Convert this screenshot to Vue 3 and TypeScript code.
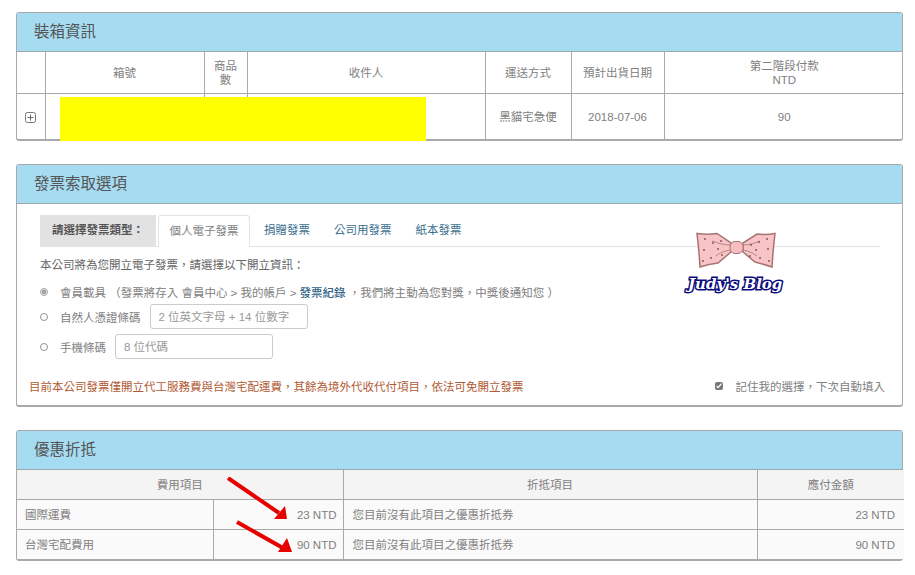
<template>
  <div class="page">
    <section class="panel">
      <h3 class="panel-title">裝箱資訊</h3>
      <div class="table-wrap">
        <table class="data-table packing">
          <colgroup>
            <col v-for="w in packingCols" :key="w" :style="{ width: w + 'px' }" />
          </colgroup>
          <tbody>
            <tr class="head-row">
              <td></td>
              <td>箱號</td>
              <td>商品<br />數</td>
              <td>收件人</td>
              <td>運送方式</td>
              <td>預計出貨日期</td>
              <td>第二階段付款<br />NTD</td>
            </tr>
            <tr class="body-row">
              <td>
                <svg class="expand" width="11" height="11" viewBox="0 0 11 11">
                  <rect x="0.5" y="0.5" width="10" height="10" rx="2" fill="none" stroke="#777" />
                  <path d="M2.5 5.5h6M5.5 2.5v6" stroke="#666" />
                </svg>
              </td>
              <td></td>
              <td></td>
              <td></td>
              <td>黑貓宅急便</td>
              <td>2018-07-06</td>
              <td>90</td>
            </tr>
          </tbody>
        </table>
        <div class="redaction"></div>
      </div>
    </section>

    <section class="panel invoice">
      <h3 class="panel-title">發票索取選項</h3>
      <div class="invoice-body">
        <div class="tabs">
          <div class="tab-label">請選擇發票類型：</div>
          <div class="tab active">個人電子發票</div>
          <div class="tab link">捐贈發票</div>
          <div class="tab link">公司用發票</div>
          <div class="tab link">紙本發票</div>
        </div>
        <p class="intro">本公司將為您開立電子發票，請選擇以下開立資訊：</p>
        <div class="option first">
          <input type="radio" name="carrier" checked />
          <span>會員載具 （發票將存入 會員中心 &gt; 我的帳戶 &gt; <a class="link">發票紀錄</a> ，我們將主動為您對獎，中獎後通知您 ）</span>
        </div>
        <div class="option">
          <input type="radio" name="carrier" />
          <span>自然人憑證條碼</span>
          <input class="text-input" type="text" placeholder="2 位英文字母 + 14 位數字" />
        </div>
        <div class="option third">
          <input type="radio" name="carrier" />
          <span>手機條碼</span>
          <input class="text-input" type="text" placeholder="8 位代碼" />
        </div>
        <div class="foot">
          <span class="notice">目前本公司發票僅開立代工服務費與台灣宅配運費，其餘為境外代收代付項目，依法可免開立發票</span>
          <label class="remember">
            <input type="checkbox" checked />
            <span>記住我的選擇，下次自動填入</span>
          </label>
        </div>
      </div>
      <div class="watermark">
        <svg width="80" height="36" viewBox="0 0 80 36">
          <path d="M1 1.5Q11 3 21 1.5L35 11V20L22 31Q13 32 4 35Q3 18 1 1.5Z" fill="#f9c4c6" stroke="#a77476" stroke-width="1.5" />
          <path d="M79 1.5Q70 3 61 2L47 11V20L59 30Q67 32 76 35Q77 18 79 1.5Z" fill="#f9c4c6" stroke="#a77476" stroke-width="1.5" />
          <path d="M35 13C27 13 22 11 16 9M35 18C29 19 25 20 20 24M47 13C54 13 59 11 64 9M47 18C53 19 57 21 61 24" fill="none" stroke="#b78486" />
          <rect x="34" y="9.5" width="13" height="12" rx="5" fill="#f9bcc0" stroke="#a77476" />
          <g fill="#7b5052">
            <circle v-for="d in bowDots" :key="d[0] + '-' + d[1]" :cx="d[0]" :cy="d[1]" r="0.9" />
          </g>
        </svg>
        <div class="blog-name">Judy's Blog</div>
      </div>
    </section>

    <section class="panel">
      <h3 class="panel-title">優惠折抵</h3>
      <div class="table-wrap">
        <table class="data-table discount">
          <colgroup>
            <col v-for="w in discountCols" :key="w" :style="{ width: w + 'px' }" />
          </colgroup>
          <tbody>
            <tr class="discount-head">
              <td colspan="2">費用項目</td>
              <td>折抵項目</td>
              <td>應付金額</td>
            </tr>
            <tr v-for="row in discountRows" :key="row.name" class="discount-row">
              <td class="item">{{ row.name }}</td>
              <td class="amount">{{ row.amount }} NTD</td>
              <td class="note">您目前沒有此項目之優惠折抵券</td>
              <td class="total">{{ row.amount }} NTD</td>
            </tr>
          </tbody>
        </table>
        <svg class="arrows" width="100" height="90" viewBox="0 0 100 90">
          <path d="M2 1L53 36" stroke="#e60000" stroke-width="4" />
          <path d="M61 42L48 42L59 29Z" fill="#e60000" />
          <path d="M11 45L57 71" stroke="#e60000" stroke-width="4" />
          <path d="M66 75L52 75L61 61Z" fill="#e60000" />
        </svg>
      </div>
    </section>
  </div>
</template>

<script setup lang="ts">
const packingCols: number[] = [28, 159, 43, 238, 86, 93, 240];
const discountCols: number[] = [196, 130, 414, 147];

// dots on the bow, roughly by eye
const bowDots: number[][] = [
  [9, 7], [17, 11], [25, 9], [8, 18], [22, 17], [7, 29], [15, 26], [26, 23],
  [71, 7], [63, 10], [55, 13], [72, 17], [60, 18], [73, 29], [64, 26], [54, 24],
];

const discountRows = [
  { name: '國際運費', amount: 23 },
  { name: '台灣宅配費用', amount: 90 },
];
</script>

<style>
html,
body {
  margin: 0;
  background: #fff;
}
</style>

<style scoped>
.page {
  width: 915px;
  height: 575px;
  box-sizing: border-box;
  padding: 12px 12px 0 16px;
  overflow: hidden;
  font-family: "Liberation Sans", "Noto Sans CJK TC", sans-serif;
  font-size: 11.5px;
  color: #808080;
}
.panel {
  position: relative;
  box-sizing: border-box;
  width: 887px;
  margin-bottom: 23px;
  border: 1px solid #a9a9a9;
  border-bottom-width: 2px;
  border-radius: 3px;
  background: #fff;
}
.panel-title {
  box-sizing: border-box;
  height: 39px;
  margin: 0;
  padding-left: 17px;
  background: #a6dcf1;
  border-bottom: 1px solid #9aa7ad;
  font-size: 15.5px;
  font-weight: 400;
  line-height: 38px;
  color: #555;
}
.table-wrap {
  position: relative;
}
.data-table {
  width: 885px;
  table-layout: fixed;
  border-collapse: collapse;
}
.data-table td {
  padding: 0;
  border-left: 1px solid #a9a9a9;
  border-top: 1px solid #a9a9a9;
  text-align: center;
  line-height: 14px;
}
.data-table tr:first-child td {
  border-top: none;
}
.data-table td:first-child {
  border-left: none;
}
.head-row td {
  height: 41px;
}
.body-row td {
  height: 45px;
}
.expand {
  display: block;
  margin: 1px auto 0;
}
.redaction {
  position: absolute;
  left: 43px;
  top: 45px;
  width: 366px;
  height: 44px;
  background: #ffff00;
}
.invoice-body {
  box-sizing: border-box;
  height: 201px;
  padding: 11px 14px 0 23px;
}
.tabs {
  display: flex;
  height: 32px;
  border-bottom: 1px solid #e2e2e2;
  width: 840px;
  box-sizing: border-box;
}
.tab-label {
  width: 116px;
  height: 32px;
  background: #e2e2e2;
  color: #555;
  font-weight: 700;
  text-align: center;
  line-height: 30px;
}
.tab {
  height: 31px;
  line-height: 30px;
  padding: 0 12px;
}
.tab.active {
  box-sizing: border-box;
  width: 92px;
  height: 32px;
  margin-left: 2px;
  margin-right: 2px;
  padding: 0;
  text-align: center;
  border: 1px solid #e2e2e2;
  border-bottom-color: #fff;
  border-radius: 3px 3px 0 0;
  background: #fff;
}
.link {
  color: #3b6f8f;
}
a.link {
  font-weight: 500;
  color: #2f6286;
}
.intro {
  margin: 11px 0 0;
  line-height: 14px;
  color: #666;
}
.option {
  display: flex;
  align-items: center;
  margin-top: 4px;
  height: 25px;
}
.option.first {
  margin-top: 11px;
  height: 17px;
}
.option.third {
  margin-top: 5px;
}
.option input[type="radio"] {
  width: 8px;
  height: 8px;
  margin: 0 12px 0 0;
  accent-color: #8a8a8a;
  opacity: 0.8;
}
.text-input {
  box-sizing: border-box;
  width: 158px;
  height: 25px;
  margin-left: 9px;
  padding: 0 8px;
  border: 1px solid #ccc;
  border-radius: 3px;
  font: inherit;
}
.text-input::placeholder {
  color: #999;
}
.foot {
  display: flex;
  justify-content: space-between;
  align-items: center;
  margin: 19px 3px 0 -11px;
}
.notice {
  color: #b15a35;
}
.remember {
  display: flex;
  align-items: center;
  gap: 13px;
}
.remember input {
  width: 8px;
  height: 8px;
  margin: 0;
  accent-color: #777;
}
.watermark {
  position: absolute;
  left: 679px;
  top: 67px;
  width: 80px;
}
.watermark svg {
  display: block;
}
.blog-name {
  margin: 6px 0 0 -8px;
  font-family: "DejaVu Serif", serif;
  font-size: 15px;
  font-style: italic;
  font-weight: 700;
  line-height: 20px;
  white-space: nowrap;
  color: #fff;
  -webkit-text-stroke: 3px #0a0a7a;
  paint-order: stroke fill;
}
.discount-head td {
  height: 29px;
  background: #f4f4f4;
}
.discount-row td {
  height: 29px;
  background: #fafafa;
}
.data-table td.item {
  padding-left: 8px;
  text-align: left;
}
.data-table td.note {
  padding-left: 9px;
  text-align: left;
}
.data-table td.amount {
  padding-right: 6px;
  text-align: right;
}
.data-table td.total {
  padding-right: 9px;
  text-align: right;
}
.arrows {
  position: absolute;
  left: 209px;
  top: 7px;
}
</style>
